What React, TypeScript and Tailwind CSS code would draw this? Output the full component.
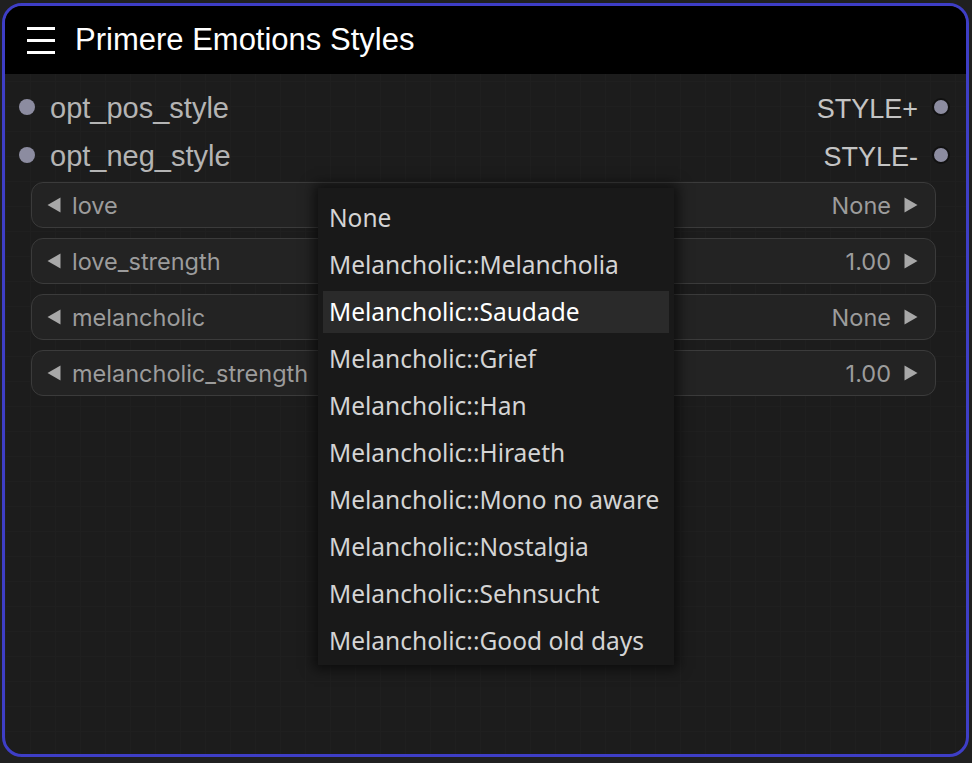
import React from 'react';

const menuItems = [
  'None',
  'Melancholic::Melancholia',
  'Melancholic::Saudade',
  'Melancholic::Grief',
  'Melancholic::Han',
  'Melancholic::Hiraeth',
  'Melancholic::Mono no aware',
  'Melancholic::Nostalgia',
  'Melancholic::Sehnsucht',
  'Melancholic::Good old days',
];

const widgets = [
  { name: 'love', value: 'None' },
  { name: 'love_strength', value: '1.00' },
  { name: 'melancholic', value: 'None' },
  { name: 'melancholic_strength', value: '1.00' },
];

const Arrow = ({ dir }: { dir: 'left' | 'right' }) => (
  <svg width="14" height="16" viewBox="0 0 14 16" className="shrink-0">
    {dir === 'left' ? (
      <polygon points="13.5,0.5 13.5,15.5 0.5,8" fill="#a8a8a8" />
    ) : (
      <polygon points="0.5,0.5 0.5,15.5 13.5,8" fill="#a8a8a8" />
    )}
  </svg>
);

const Slot = ({ label, output }: { label: string; output: string }) => (
  <div className="flex h-[48px] items-center justify-between pl-[14px] pr-[16px]">
    <div className="flex items-center gap-[15px]">
      <span className="h-[16px] w-[16px] rounded-full bg-[#8c8ca0]" />
      <span className="pt-[4px] text-[29px] text-[#b4b4b4]">{label}</span>
    </div>
    <div className="flex items-center gap-[14px]">
      <span className="pt-[4px] text-[27px] text-[#c4c4c4]">{output}</span>
      <span className="h-[18px] w-[18px] rounded-full border-2 border-[#111] bg-[#8c8ca0]" />
    </div>
  </div>
);

export default function App() {
  return (
    <div className="h-[763px] w-[972px] bg-[#202020] pl-[2px] pt-[3px] font-['Liberation_Sans',Arial,sans-serif]">
      <div className="relative h-[754px] w-[967px] overflow-hidden rounded-[20px] border-[3px] border-[#3e3ec6] bg-[#1c1c1c] bg-[linear-gradient(#1f1f1f_1px,transparent_1px),linear-gradient(90deg,#1f1f1f_1px,transparent_1px)] bg-[length:25px_25px]">
        {/* title bar */}
        <div className="flex h-[68px] items-center bg-black pl-[22px]">
          <svg width="28" height="27" viewBox="0 0 28 27">
            <rect x="0" y="0" width="28" height="3" fill="#fff" />
            <rect x="0" y="12" width="28" height="3" fill="#fff" />
            <rect x="0" y="24" width="28" height="3" fill="#fff" />
          </svg>
          <span className="ml-[20px] text-[31px] text-white">Primere Emotions Styles</span>
        </div>

        {/* slots */}
        <div className="pt-[9px]">
          <Slot label="opt_pos_style" output="STYLE+" />
          <Slot label="opt_neg_style" output="STYLE-" />
        </div>

        {/* widgets */}
        <div className="ml-[26px] mr-[30px] mt-[3px] flex flex-col gap-[10px] font-['Inter',sans-serif]">
          {widgets.map((w) => (
            <div
              key={w.name}
              className="flex h-[46px] items-center justify-between rounded-[12px] border border-[#3b3b3b] bg-[#232323] pl-[15px] pr-[17px]"
            >
              <div className="flex items-center gap-[11px]">
                <Arrow dir="left" />
                <span className="pt-[2px] text-[23.5px] text-[#9c9c9c]">{w.name}</span>
              </div>
              <div className="flex items-center gap-[13px]">
                <span className="pt-[2px] text-[23.5px] text-[#9c9c9c]">{w.value}</span>
                <Arrow dir="right" />
              </div>
            </div>
          ))}
        </div>

        {/* dropdown menu */}
        <div className="absolute left-[313px] top-[182px] flex w-[356px] flex-col gap-[5px] bg-[#191919] px-[5px] pb-[3px] pt-[9px] font-['Noto_Sans',sans-serif] shadow-[0_0_12px_4px_rgba(0,0,0,0.6)]">
          {menuItems.map((item) => (
            <div
              key={item}
              className={
                item === 'Melancholic::Saudade'
                  ? 'flex h-[42px] items-center bg-[#2a2a2a] pl-[6px] text-[24.5px] text-white'
                  : 'flex h-[42px] items-center pl-[6px] text-[24.5px] text-[#d4d4d4]'
              }
            >
              {item}
            </div>
          ))}
        </div>
      </div>
    </div>
  );
}
